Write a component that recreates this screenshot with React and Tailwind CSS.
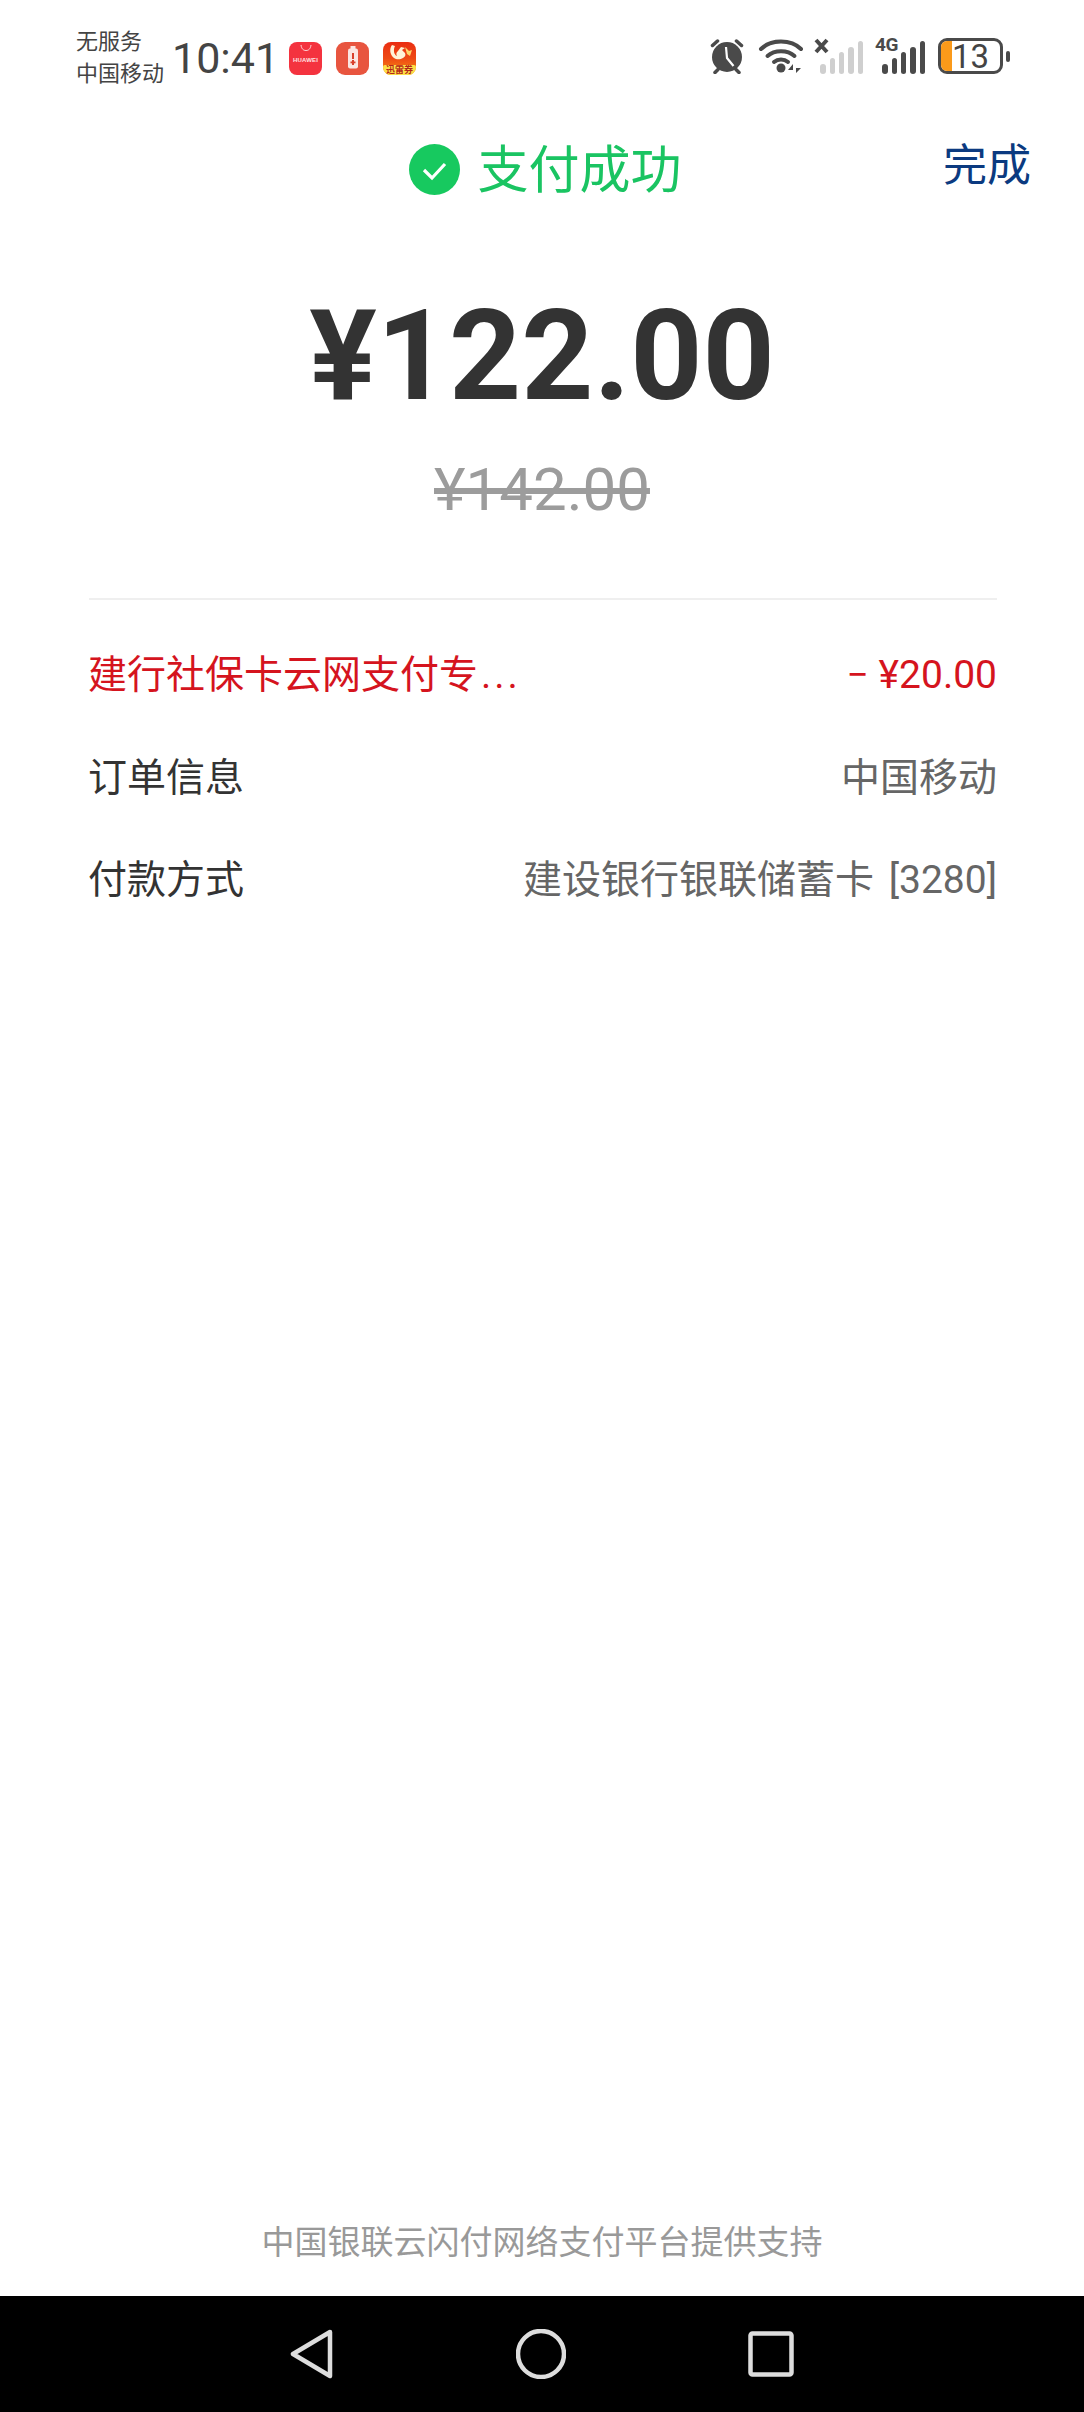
import React from 'react';

const CN = 'font-["Roboto","Noto_Sans_CJK_SC",sans-serif]';

function HuaweiIcon() {
  return (
    <div className="flex h-[33px] w-[33px] flex-col items-center rounded-[8px] bg-[#f4333f]">
      <svg width="16" height="9" viewBox="0 0 16 9" className="mt-[2px]">
        <path d="M3 1c.5 4 2.500 5.500 5 5.500s4.500-1.500 5-5.500" fill="none" stroke="#ffd9dc" strokeWidth="1" />
      </svg>
      <span className="mt-[3px] font-['Liberation_Sans',sans-serif] text-[6px] leading-[8px] font-bold tracking-[0.2px] text-[#ffe3e5]">HUAWEI</span>
    </div>
  );
}

function BatteryAppIcon() {
  return (
    <div className="flex h-[33px] w-[33px] items-center justify-center rounded-[9px] bg-[#e8553f]">
      <svg width="12" height="24" viewBox="0 0 12 24">
        <rect x="3.500" y="0" width="5" height="3" fill="#fbe6e2" />
        <rect x="1" y="2.500" width="10" height="20" rx="2" fill="#fbe6e2" />
        <rect x="5" y="7" width="2" height="6" fill="#d9402c" />
        <rect x="3.500" y="15.500" width="5" height="1.800" fill="#d9402c" />
        <rect x="5" y="14" width="2" height="5" fill="#d9402c" />
      </svg>
    </div>
  );
}

function SquirrelIcon() {
  return (
    <div className="relative h-[33px] w-[33px] overflow-hidden rounded-[8px] bg-gradient-to-b from-[#ea2c12] via-[#ee4a14] to-[#f58a12]">
      <svg width="33" height="24" viewBox="0 0 33 24" className="absolute top-0 left-0">
        <path d="M9 3c-3 4-2 10 2 13 2 1.500 6 2 9 0 2-1 3-3 2-5l-3-3 3-2-4-1-3 4c-2 2-2 3-1 5-3-1-4-6-2-10z" fill="#fff3d8" />
        <path d="M22 5l4 4 3-1-2 6-3-2z" fill="#ffd56a" />
      </svg>
      <div className="absolute right-0 bottom-0 left-0 flex h-[10px] items-center justify-center rounded-t-[2px] bg-[#fde047]">
        <span className={`${CN} text-[9px] leading-[10px] font-bold text-[#b3261a]`}>迅雷券</span>
      </div>
    </div>
  );
}

function AlarmIcon() {
  return (
    <svg width="37" height="35" viewBox="0 0 37 35">
      <circle cx="18" cy="18" r="15" fill="#4a4a4a" />
      <path d="M3.500 6.500l5-4.500M32.500 6.500l-5-4.500" stroke="#4a4a4a" strokeWidth="3.500" strokeLinecap="round" fill="none" />
      <path d="M6 33.500l3-3M30 33.500l-3-3" stroke="#4a4a4a" strokeWidth="3.500" strokeLinecap="round" fill="none" />
      <path d="M17 8l1 11 6.500 8" stroke="#fff" strokeWidth="2.200" fill="none" />
    </svg>
  );
}

function WifiIcon() {
  return (
    <svg width="46" height="35" viewBox="0 0 46 35">
      <path d="M3 10C13 0 33 0 43 10" stroke="#4a4a4a" strokeWidth="4" strokeLinecap="round" fill="none" />
      <path d="M9.500 17c7-6.500 20-6.500 27 0" stroke="#4a4a4a" strokeWidth="4" strokeLinecap="round" fill="none" />
      <path d="M16 23c4-3.500 10-3.500 14 0" stroke="#4a4a4a" strokeWidth="4" strokeLinecap="round" fill="none" />
      <circle cx="23" cy="29" r="4.500" fill="#4a4a4a" />
      <path d="M35 34v-9l-5 6h5zM38 25v9l5-5h-5z" fill="#4a4a4a" />
    </svg>
  );
}

function SignalBars({ color }) {
  const heights = [10, 16, 22, 27, 33];
  return (
    <div className="flex items-end gap-[3.800px]">
      {heights.map((h, i) => (
        <div key={i} className="w-[5.500px] rounded-full" style={{ height: h, backgroundColor: color }} />
      ))}
    </div>
  );
}

function Battery() {
  return (
    <div className="flex items-center gap-[3px]">
      <div className="relative h-[36px] w-[65px] overflow-hidden rounded-[9px] border-[3px] border-[#4a4a4a]">
        <div className="absolute top-0 bottom-0 left-0 w-[11px] bg-[#fb9a1a]" />
        <span className={`${CN} absolute top-0 bottom-0 left-[11px] flex items-center text-[33px] leading-none text-[#444]`}>13</span>
      </div>
      <div className="h-[11px] w-[4px] rounded-full bg-[#4a4a4a]" />
    </div>
  );
}

function StatusBar() {
  return (
    <div className={`${CN} flex h-[110px] items-start justify-between pt-[26px] pr-[74px] pl-[76px]`}>
      <div className="flex items-center">
        <div className="-mt-[1px] flex w-[96px] flex-col text-[22px] leading-[32px] text-[#444]">
          <span>无服务</span>
          <span>中国移动</span>
        </div>
        <span className="text-[43px] leading-[64px] text-[#444]">10:41</span>
        <div className="ml-[10px] flex gap-[14px]">
          <HuaweiIcon />
          <BatteryAppIcon />
          <SquirrelIcon />
        </div>
      </div>
      <div className="flex h-[60px] items-center">
        <AlarmIcon />
        <div className="ml-[12px]"><WifiIcon /></div>
        <div className="relative ml-[10px] h-[36px] w-[49px]">
          <svg width="15" height="16" viewBox="0 0 15 16" className="absolute top-0 left-0">
            <path d="M2 2l11 12M13 2L2 14" stroke="#4a4a4a" strokeWidth="4" fill="none" />
          </svg>
          <div className="absolute right-0 bottom-0">
            <SignalBars color="#cfcfcf" />
          </div>
        </div>
        <div className="relative ml-[12px] h-[36px] w-[50px]">
          <span className="absolute top-[-3px] left-0 font-['Roboto',sans-serif] text-[19px] leading-[20px] font-bold tracking-[-0.5px] text-[#4a4a4a]">4G</span>
          <div className="absolute right-0 bottom-0">
            <SignalBars color="#4a4a4a" />
          </div>
        </div>
        <div className="ml-[13px]"><Battery /></div>
      </div>
    </div>
  );
}

function Row({ label, value, labelClass, valueClass }) {
  return (
    <div className="flex h-[102.500px] items-center justify-between text-[39px]">
      <span className={labelClass}>{label}</span>
      <span className={valueClass}>{value}</span>
    </div>
  );
}

export default function App() {
  return (
    <div className={`${CN} flex h-[2412px] w-[1084px] flex-col bg-white`}>
      <StatusBar />

      {/* title */}
      <div className="relative flex h-[118px] items-center justify-center pl-[7px]">
        <div className="flex items-center gap-[17px]">
          <svg width="51" height="51" viewBox="0 0 51 51">
            <circle cx="25.500" cy="25.500" r="25.500" fill="#17c95f" />
            <path d="M15 26l8 8 13-14" fill="none" stroke="#fff" strokeWidth="3.200" />
          </svg>
          <span className="translate-y-[2px] text-[51px] leading-[60px] text-[#1ac462]">支付成功</span>
        </div>
        <span className="absolute top-[26px] right-[53px] text-[44px] leading-[60px] text-[#0b3a80]">完成</span>
      </div>

      {/* amount */}
      <div className="mt-[65px] flex flex-col items-center">
        <span className="text-[126px] leading-[126px] font-bold text-[#333]">¥122.00</span>
        <span className="mt-[36px] text-[60px] leading-[70px] text-[#9c9c9c] line-through">¥142.00</span>
      </div>

      <div className="mt-[73px] mr-[87px] ml-[88px] flex flex-col">
        <div className="ml-[1px] h-[2px] bg-[#efefef]" />
        <div className="mt-[24px] flex flex-col">
          <Row
            label={<>建行社保卡云网支付专<span className="ml-[3px] tracking-[3px]">...</span></>}
            value="− ¥20.00"
            labelClass="text-[#d5141e]"
            valueClass="text-[#d5141e]"
          />
          <Row label="订单信息" value="中国移动" labelClass="text-[#333]" valueClass="text-[#666]" />
          <Row
            label="付款方式"
            value="建设银行银联储蓄卡 [3280]"
            labelClass="text-[#333]"
            valueClass="text-[#666] [word-spacing:5px]"
          />
        </div>
      </div>

      {/* footer */}
      <div className="mt-auto flex h-[112px] justify-center pt-[35px] text-[33px] leading-[48px] text-[#999]">
        中国银联云闪付网络支付平台提供支持
      </div>

      {/* nav bar */}
      <div className="flex h-[116px] items-center justify-center gap-[182px] bg-black">
        <svg width="44" height="50" viewBox="0 0 44 50">
          <path d="M40 3L3 25l37 22z" fill="none" stroke="#ddd" strokeWidth="4.500" strokeLinejoin="round" />
        </svg>
        <svg width="50" height="50" viewBox="0 0 50 50">
          <circle cx="25" cy="25" r="23" fill="none" stroke="#ddd" strokeWidth="4.500" />
        </svg>
        <svg width="46" height="46" viewBox="0 0 46 46">
          <rect x="2.500" y="2.500" width="41" height="41" rx="2" fill="none" stroke="#ddd" strokeWidth="4.500" />
        </svg>
      </div>
    </div>
  );
}
